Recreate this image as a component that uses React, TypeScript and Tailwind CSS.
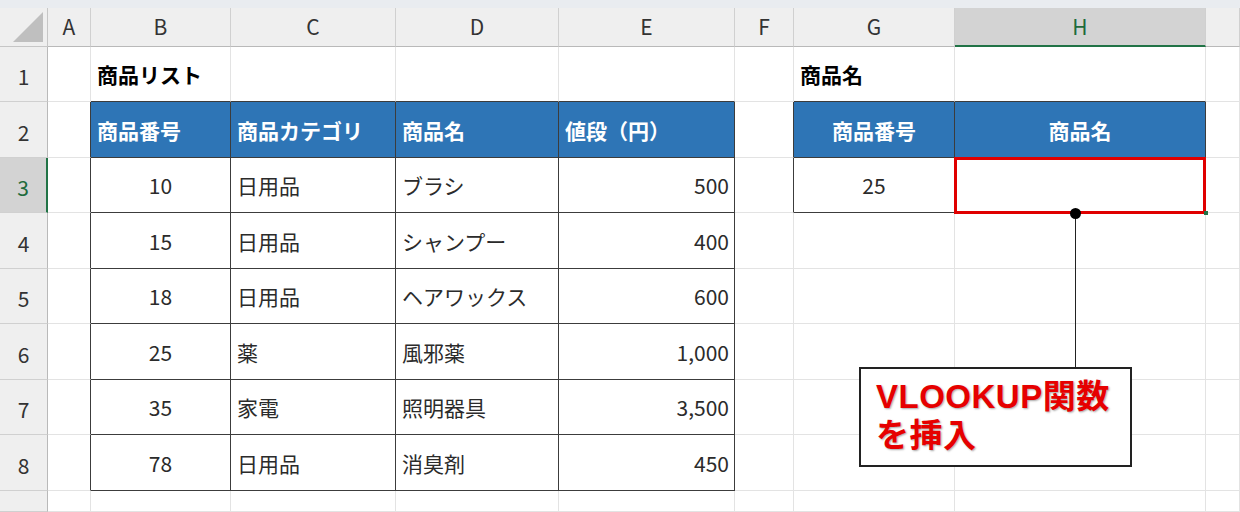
import React from "react";

const COLS = [48, 43, 140, 165, 163, 176, 59, 161, 251, 34];
const ROWS = [55, 56, 55, 56, 55, 56, 55, 56, 21];
const LETTERS = ["A", "B", "C", "D", "E", "F", "G", "H", ""];

type Cell = { text: string; align?: "l" | "c" | "r"; head?: boolean; bold?: boolean };

const data: Record<string, Cell> = {
  "1-2": { text: "商品リスト", bold: true, align: "l" },
  "1-7": { text: "商品名", bold: true, align: "l" },
  "2-2": { text: "商品番号", head: true, align: "l" },
  "2-3": { text: "商品カテゴリ", head: true, align: "l" },
  "2-4": { text: "商品名", head: true, align: "l" },
  "2-5": { text: "値段（円）", head: true, align: "l" },
  "2-7": { text: "商品番号", head: true, align: "c" },
  "2-8": { text: "商品名", head: true, align: "c" },
  "3-7": { text: "25", align: "c" },
};

const rowsData = [
  ["10", "日用品", "ブラシ", "500"],
  ["15", "日用品", "シャンプー", "400"],
  ["18", "日用品", "ヘアワックス", "600"],
  ["25", "薬", "風邪薬", "1,000"],
  ["35", "家電", "照明器具", "3,500"],
  ["78", "日用品", "消臭剤", "450"],
];
rowsData.forEach((r, i) => {
  data[`${i + 3}-2`] = { text: r[0], align: "c" };
  data[`${i + 3}-3`] = { text: r[1], align: "l" };
  data[`${i + 3}-4`] = { text: r[2], align: "l" };
  data[`${i + 3}-5`] = { text: r[3], align: "r" };
});

const inTable = (r: number, c: number) =>
  (r >= 2 && r <= 8 && c >= 2 && c <= 5) || (r >= 2 && r <= 3 && c >= 7 && c <= 8);

const FONT = "[font-family:'Noto_Sans_CJK_JP','Noto_Sans',sans-serif]";

export default function App() {
  const cells: React.ReactNode[] = [];
  for (let c = 0; c < COLS.length; c++) {
    if (c === 0) {
      cells.push(
        <div key="corner" className="relative bg-[#efefef] border-r border-b border-[#c6c6c6]">
          <div className="absolute right-[4px] bottom-[4px] w-0 h-0 border-l-[30px] border-l-transparent border-b-[30px] border-b-[#bfbfbf]" />
        </div>
      );
    } else {
      const sel = c === 8;
      cells.push(
        <div
          key={`h${c}`}
          className={
            "flex items-center justify-center text-[21px] border-r border-[#d0d0d0] " +
            (sel
              ? "bg-[#d3d3d3] text-[#1e6b3c] border-b-2 border-b-[#217346]"
              : "bg-[#efefef] text-[#333] border-b border-b-[#b9b9b9]")
          }
        >
          {LETTERS[c - 1]}
        </div>
      );
    }
  }
  for (let r = 1; r <= ROWS.length; r++) {
    for (let c = 0; c < COLS.length; c++) {
      if (c === 0) {
        const sel = r === 3;
        cells.push(
          <div
            key={`r${r}`}
            className={
              "flex items-center justify-center pt-[6px] text-[21px] border-b border-[#d0d0d0] " +
              (sel
                ? "bg-[#d3d3d3] text-[#1e6b3c] border-r-2 border-r-[#217346]"
                : "bg-[#efefef] text-[#333] border-r border-r-[#b9b9b9]")
            }
          >
            {r <= 8 ? r : ""}
          </div>
        );
        continue;
      }
      const cell = data[`${r}-${c}`];
      const rightDark = inTable(r, c) || inTable(r, c + 1);
      const botDark = inTable(r, c) || inTable(r + 1, c);
      const cls = [
        "flex items-center overflow-hidden whitespace-nowrap",
        rightDark ? "border-r border-r-[#3c3c3c]" : "border-r border-r-[#e3e3e3]",
        botDark ? "border-b border-b-[#3c3c3c]" : "border-b border-b-[#e3e3e3]",
        cell?.head ? "bg-[#2e75b6] text-white font-bold" : "bg-white",
        cell?.bold ? "font-bold text-black" : "",
        !cell?.head && !cell?.bold ? "text-[#2b2b2b]" : "",
        cell?.align === "c" ? "justify-center" : cell?.align === "r" ? "justify-end pr-[5px]" : "pl-[6px]",
        "text-[21px] pt-[2px]",
      ].join(" ");
      cells.push(
        <div key={`${r}-${c}`} className={cls}>
          {cell?.text ?? ""}
        </div>
      );
    }
  }

  return (
    <div className={`w-[1240px] h-[512px] overflow-hidden bg-white ${FONT}`}>
      <div className="h-[8px] bg-[#e9ecf0]" />
      <div className="relative">
        <div
          className="grid"
          style={{
            gridTemplateColumns: COLS.map((w) => `${w}px`).join(" "),
            gridTemplateRows: ["39px", ...ROWS.map((h) => `${h}px`)].join(" "),
          }}
        >
          {cells}
        </div>
        {/* selected cell red box */}
        <div className="absolute left-[954px] top-[149px] w-[252px] h-[57px] border-[3px] border-[#e00000]" />
        <div className="absolute left-[1204px] top-[203px] w-[4px] h-[4px] bg-[#217346]" />
        {/* connector */}
        <div className="absolute left-[1075px] top-[205px] w-[1px] h-[156px] bg-[#222]" />
        <div className="absolute left-[1070px] top-[200px] w-[11px] h-[11px] rounded-full bg-black" />
        {/* callout */}
        <div className="absolute left-[859px] top-[359px] w-[273px] h-[100px] border-2 border-[#222] bg-white pl-[15px] pt-[8px]">
          <div className="text-[#e60000] font-bold text-[33px] leading-[39px] tracking-[0.5px] [text-shadow:1px_1px_2px_rgba(0,0,0,0.35)] [font-family:'Liberation_Sans','Noto_Sans_CJK_JP',sans-serif]">
            <div>VLOOKUP関数</div>
            <div>を挿入</div>
          </div>
        </div>
      </div>
    </div>
  );
}
